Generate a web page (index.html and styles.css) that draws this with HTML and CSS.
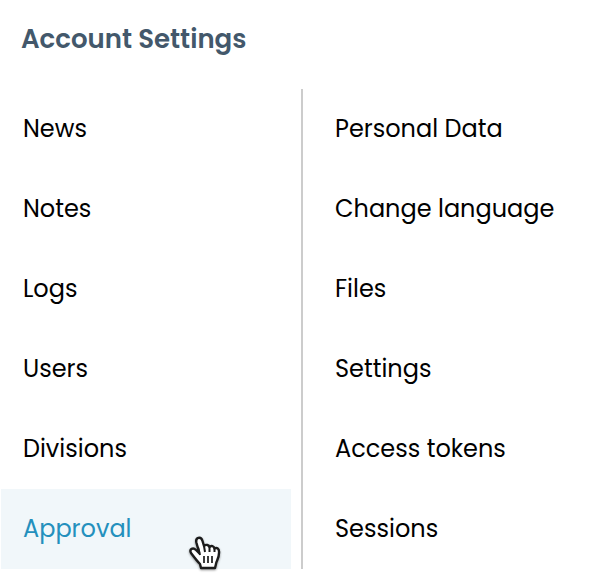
FILE: index.html
```html
<!DOCTYPE html>
<html lang="en">

<head>
    <meta charset="UTF-8">
    <meta name="viewport" content="width=device-width, initial-scale=1.0">
    <title>Account Settings</title>
    <link rel="stylesheet" href="styles.css">
</head>

<body>
    <nav class="settings-menu" aria-labelledby="settings-title">
        <h1 class="settings-title" id="settings-title">Account Settings</h1>

        <div class="menu-columns">
            <ul class="menu-list">
                <li><a class="menu-link" href="#news">News</a></li>
                <li><a class="menu-link" href="#notes">Notes</a></li>
                <li><a class="menu-link" href="#logs">Logs</a></li>
                <li><a class="menu-link" href="#users">Users</a></li>
                <li><a class="menu-link" href="#divisions">Divisions</a></li>
                <li class="menu-item-active">
                    <a class="menu-link active" href="#approval">Approval</a>
                    <svg class="hand-cursor" width="32" height="38" viewBox="0 0 32 38" aria-hidden="true">
                        <path d="M10 17 L7.5 8 C6 2 12 1 13.5 6 L15 11 C17 9 20 10 20.500 12 C22 10 25 11 25.500 13.500 C28 12 30.500 14 30 18 C30 24 27 26 27 29 L26 33 H12 L11 29 C8 26 5 22 2 18 C0 14 4 12 7 15 L10 18 Z" fill="#fff" stroke="#1c1c1c" stroke-width="2.4" stroke-linejoin="round" />
                        <path d="M9 12 L11 20 M15 11 L16 17 M20.500 12 V17 M25.500 13 V17" fill="none" stroke="#1c1c1c" stroke-width="2" />
                        <path d="M15 21 V28 M19 21 V28 M23 21 V28" fill="none" stroke="#1c1c1c" stroke-width="1.7" />
                    </svg>
                </li>
            </ul>

            <ul class="menu-list menu-list-right">
                <li><a class="menu-link" href="#personal-data">Personal Data</a></li>
                <li><a class="menu-link" href="#language">Change language</a></li>
                <li><a class="menu-link" href="#files">Files</a></li>
                <li><a class="menu-link" href="#settings">Settings</a></li>
                <li><a class="menu-link" href="#tokens">Access tokens</a></li>
                <li><a class="menu-link" href="#sessions">Sessions</a></li>
            </ul>
        </div>
    </nav>
</body>

</html>
```

FILE: styles.css
```css
* {
    box-sizing: border-box;
}

body {
    margin: 0;
    background: #fff;
    color: #000;
    font-family: Poppins, Inter, sans-serif;
}

.settings-menu {
    padding: 19px 0 8px 1px;
}

.settings-title {
    margin: 0 0 30px;
    padding-left: 20px;
    color: #43586b;
    font-size: 26px;
    font-weight: 600;
    line-height: 40px;
}

.menu-columns {
    display: grid;
    grid-template-columns: 290fr 308fr;
    gap: 10px;
}

.menu-list {
    margin: 0;
    padding: 0;
    list-style: none;
}

.menu-list-right {
    border-left: 2px solid #ccc;
    padding-left: 10px;
}

.menu-link {
    display: block;
    padding: 20px 22px;
    color: #000;
    font-size: 24px;
    line-height: 40px;
    text-decoration: none;
}

.menu-link:hover,
.menu-link.active {
    background: #f1f7fa;
    color: #2490bd;
}

.menu-item-active {
    position: relative;
}

.hand-cursor {
    position: absolute;
    right: 70px;
    bottom: -4px;
    filter: drop-shadow(0 1px 1px rgba(0, 0, 0, 0.4));
    pointer-events: none;
}
```
